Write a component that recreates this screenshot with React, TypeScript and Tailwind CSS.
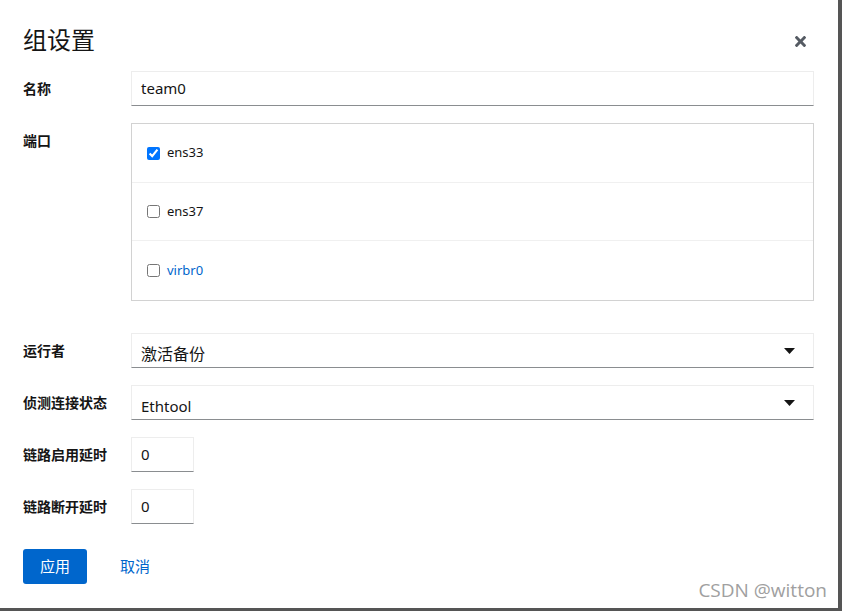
import React from "react";

const cjk = "font-['Noto_Sans','Noto_Sans_CJK_SC',sans-serif]";

function Caret() {
  return (
    <svg width="11" height="6" viewBox="0 0 11 6" className="block">
      <path d="M0 0 H11 L5.5 6 Z" fill="#151515" />
    </svg>
  );
}

function CloseIcon() {
  return (
    <svg width="11" height="11" viewBox="0 80 352 352" className="block">
      <path
        fill="#555b63"
        d="M242.72 256l100.07-100.07c12.28-12.28 12.28-32.19 0-44.480l-22.24-22.24c-12.28-12.28-32.19-12.28-44.48 0L176 189.28 75.93 89.21c-12.28-12.28-32.19-12.28-44.48 0L9.21 111.45c-12.28 12.28-12.28 32.19 0 44.48L109.28 256 9.21 356.07c-12.28 12.28-12.28 32.19 0 44.48l22.24 22.24c12.28 12.28 32.2 12.28 44.48 0L176 322.72l100.07 100.07c12.28 12.28 32.2 12.28 44.48 0l22.24-22.24c12.28-12.28 12.28-32.19 0-44.48L242.72 256z"
      />
    </svg>
  );
}

function Label({ children }: { children: React.ReactNode }) {
  return (
    <div className="w-[108px] shrink-0 pt-[8px] text-[14px] leading-[20px] font-bold text-[#151515]">
      {children}
    </div>
  );
}

function Field({ children, className = "" }: { children: React.ReactNode; className?: string }) {
  return (
    <div
      className={
        "h-[35px] border border-[#ededed] border-b-[#8a8d90] bg-white flex items-center pl-[9px] text-[#151515] " +
        className
      }
    >
      {children}
    </div>
  );
}

function PortRow({
  name,
  checked,
  link,
  className,
}: {
  name: string;
  checked?: boolean;
  link?: boolean;
  className: string;
}) {
  return (
    <div className={"flex items-center pl-[15px] " + className}>
      <input type="checkbox" checked={!!checked} readOnly className="m-0 w-[13px] h-[13px]" />
      <span className={"ml-[7px] text-[13px] " + (link ? "text-[#0066cc]" : "text-[#151515]")}>{name}</span>
    </div>
  );
}

export default function App() {
  return (
    <div className={"w-[842px] h-[611px] bg-[#555555] overflow-hidden " + cjk}>
      <div className="w-[838px] h-[608px] bg-white relative">
        <div className="flex items-center justify-between pl-[23px] pr-[32px] pt-[24px] h-[56px]">
          <div className="text-[24px] leading-[32px] text-[#151515]">组设置</div>
          <div className="mt-[3px]">
            <CloseIcon />
          </div>
        </div>

        <div className="pl-[23px] pr-[24px]">
          <div className="flex mt-[15px]">
            <Label>名称</Label>
            <Field className="flex-1 text-[15px]">team0</Field>
          </div>

          <div className="flex mt-[17px]">
            <Label>端口</Label>
            <div className="flex-1 border border-[#d2d2d2] flex flex-col">
              <PortRow name="ens33" checked className="h-[58px]" />
              <PortRow name="ens37" className="h-[58px] border-t border-[#f0f0f0]" />
              <PortRow name="virbr0" link className="h-[60px] border-t border-[#f0f0f0]" />
            </div>
          </div>

          <div className="flex mt-[32px]">
            <Label>运行者</Label>
            <Field className="flex-1 justify-between pr-[18px]">
              <span className="text-[16px] pt-[6px]">激活备份</span>
              <Caret />
            </Field>
          </div>

          <div className="flex mt-[17px]">
            <Label>侦测连接状态</Label>
            <Field className="flex-1 justify-between pr-[18px]">
              <span className="text-[15px] pt-[7px]">Ethtool</span>
              <Caret />
            </Field>
          </div>

          <div className="flex mt-[17px]">
            <Label>链路启用延时</Label>
            <Field className="w-[63px] text-[15px]">0</Field>
          </div>

          <div className="flex mt-[17px]">
            <Label>链路断开延时</Label>
            <Field className="w-[63px] text-[15px]">0</Field>
          </div>

          <div className="flex items-center mt-[25px]">
            <button className="w-[64px] h-[35px] rounded-[3px] bg-[#0066cc] text-white text-[15px]">应用</button>
            <button className="ml-[33px] text-[15px] text-[#0066cc]">取消</button>
          </div>
        </div>

        <div className="absolute right-[11px] bottom-[4px] text-[19px] text-[#a0a0a0] font-['Open_Sans',sans-serif]">
          CSDN @witton
        </div>
      </div>
    </div>
  );
}
